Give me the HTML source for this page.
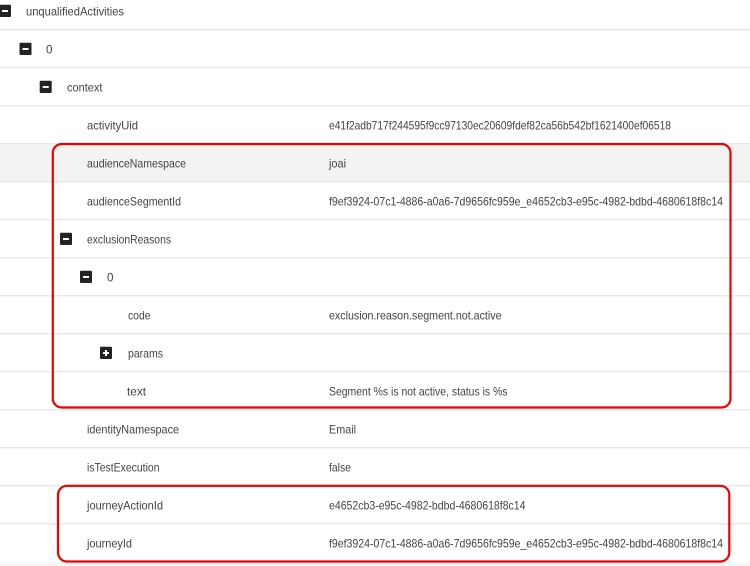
<!DOCTYPE html>
<html lang="en">
<head>
<meta charset="utf-8">
<title>Activities</title>
<style>
html,body{margin:0;padding:0;background:#fff;width:750px;height:566px;overflow:hidden}
svg{display:block}
text{font-family:"Liberation Sans",sans-serif;font-size:12px;fill:#444;filter:blur(0.25px)}
</style>
</head>
<body>
<svg width="750" height="566" viewBox="0 0 750 566" xmlns="http://www.w3.org/2000/svg">
<rect width="750" height="566" fill="#fff"/>
<rect x="0" y="144" width="750" height="37" fill="#f3f3f3"/>
<rect x="0" y="562" width="750" height="4" fill="#f6f6f6"/>
<g fill="#e9e9e9">
<rect x="0" y="29" width="750" height="1.5"/>
<rect x="0" y="67" width="750" height="1.5"/>
<rect x="0" y="105" width="750" height="1.5"/>
<rect x="0" y="143" width="750" height="1.5"/>
<rect x="0" y="181" width="750" height="1.5"/>
<rect x="0" y="219" width="750" height="1.5"/>
<rect x="0" y="257" width="750" height="1.5"/>
<rect x="0" y="295" width="750" height="1.5"/>
<rect x="0" y="333" width="750" height="1.5"/>
<rect x="0" y="371" width="750" height="1.5"/>
<rect x="0" y="409" width="750" height="1.5"/>
<rect x="0" y="447" width="750" height="1.5"/>
<rect x="0" y="485" width="750" height="1.5"/>
<rect x="0" y="523" width="750" height="1.5"/>
</g>
<g fill="#232323">
<rect x="-1" y="4.700" width="12" height="12.300" rx="1"/>
<rect x="19.500" y="42.700" width="12" height="12.300" rx="1"/>
<rect x="39.700" y="80.700" width="12" height="12.300" rx="1"/>
<rect x="60" y="232.700" width="12" height="12.300" rx="1"/>
<rect x="80" y="270.700" width="12" height="12.300" rx="1"/>
<rect x="100" y="346.700" width="12" height="12.300" rx="1"/>
</g>
<g fill="#fff">
<rect x="2" y="10" width="6" height="2"/>
<rect x="22.500" y="48" width="6" height="2"/>
<rect x="42.700" y="86" width="6" height="2"/>
<rect x="63" y="238" width="6" height="2"/>
<rect x="83" y="276" width="6" height="2"/>
<rect x="103" y="352" width="6" height="2"/>
<rect x="105" y="350" width="2" height="6"/>
</g>
<g>
<text x="26" y="15.500" textLength="98" lengthAdjust="spacingAndGlyphs">unqualifiedActivities</text>
<text x="46" y="53.500" textLength="6.500" lengthAdjust="spacingAndGlyphs">0</text>
<text x="67" y="91.500" textLength="35.500" lengthAdjust="spacingAndGlyphs">context</text>
<text x="87" y="129.500" textLength="51" lengthAdjust="spacingAndGlyphs">activityUid</text>
<text x="87" y="167.500" textLength="99" lengthAdjust="spacingAndGlyphs">audienceNamespace</text>
<text x="87" y="205.500" textLength="94" lengthAdjust="spacingAndGlyphs">audienceSegmentId</text>
<text x="87" y="243.500" textLength="84" lengthAdjust="spacingAndGlyphs">exclusionReasons</text>
<text x="107" y="281.500" textLength="6.500" lengthAdjust="spacingAndGlyphs">0</text>
<text x="128" y="319.500" textLength="22.500" lengthAdjust="spacingAndGlyphs">code</text>
<text x="128" y="357.500" textLength="35" lengthAdjust="spacingAndGlyphs">params</text>
<text x="127" y="395.500" textLength="19" lengthAdjust="spacingAndGlyphs">text</text>
<text x="87" y="433.500" textLength="92" lengthAdjust="spacingAndGlyphs">identityNamespace</text>
<text x="87" y="471.500" textLength="72.500" lengthAdjust="spacingAndGlyphs">isTestExecution</text>
<text x="87" y="509.500" textLength="76" lengthAdjust="spacingAndGlyphs">journeyActionId</text>
<text x="87" y="547.500" textLength="45" lengthAdjust="spacingAndGlyphs">journeyId</text>
<text x="329" y="129.500" textLength="342" lengthAdjust="spacingAndGlyphs">e41f2adb717f244595f9cc97130ec20609fdef82ca56b542bf1621400ef06518</text>
<text x="329" y="167.500" textLength="17" lengthAdjust="spacingAndGlyphs">joai</text>
<text x="329" y="205.500" textLength="394" lengthAdjust="spacingAndGlyphs">f9ef3924-07c1-4886-a0a6-7d9656fc959e_e4652cb3-e95c-4982-bdbd-4680618f8c14</text>
<text x="329" y="319.500" textLength="172.500" lengthAdjust="spacingAndGlyphs">exclusion.reason.segment.not.active</text>
<text x="329" y="395.500" textLength="178.500" lengthAdjust="spacingAndGlyphs">Segment %s is not active, status is %s</text>
<text x="329" y="433.500" textLength="27" lengthAdjust="spacingAndGlyphs">Email</text>
<text x="329" y="471.500" textLength="22" lengthAdjust="spacingAndGlyphs">false</text>
<text x="329" y="509.500" textLength="196.500" lengthAdjust="spacingAndGlyphs">e4652cb3-e95c-4982-bdbd-4680618f8c14</text>
<text x="329" y="547.500" textLength="394" lengthAdjust="spacingAndGlyphs">f9ef3924-07c1-4886-a0a6-7d9656fc959e_e4652cb3-e95c-4982-bdbd-4680618f8c14</text>
</g>
<rect x="52.800" y="144" width="677.700" height="263.500" rx="9" fill="none" stroke="#ee0000" stroke-width="2.200"/>
<rect x="58" y="485.800" width="671.300" height="75.700" rx="9" fill="none" stroke="#ee0000" stroke-width="2.200"/>
</svg>
</body>
</html>
